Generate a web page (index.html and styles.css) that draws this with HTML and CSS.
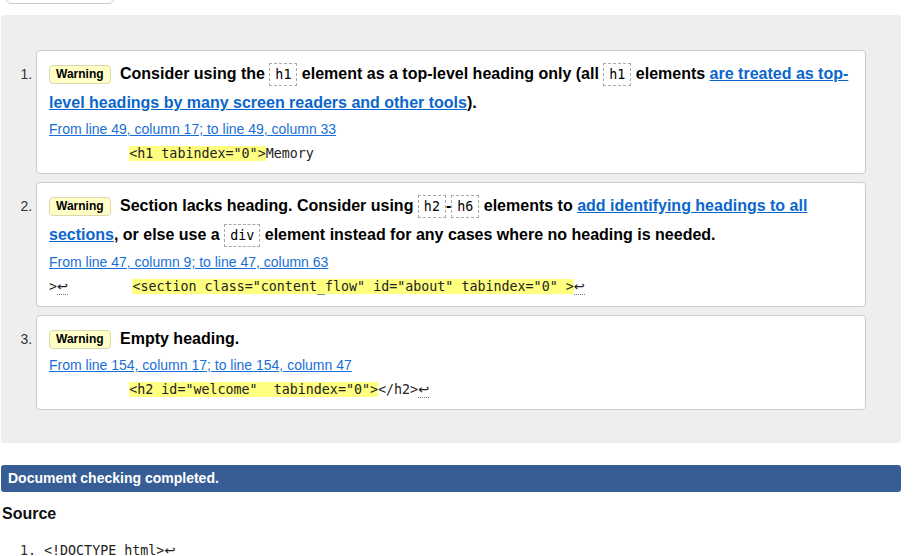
FILE: index.html
```html
<!DOCTYPE html>
<html lang="en">
<head>
<meta charset="utf-8">
<title>Nu Html Checker results</title>
<link rel="stylesheet" href="styles.css">
</head>
<body>
<div class="page">
  <div class="filter-bar"><button class="filter-btn" type="button">Message Filtering</button></div>

  <div class="results">
    <ol class="messages">
      <li class="msg">
        <p class="msg-text"><span class="badge">Warning</span> Consider using the <code class="el">h1</code> element as a top-level heading only (all <code class="el">h1</code> elements <a href="#">are treated as top-level headings by many screen readers and other tools</a>).</p>
        <p class="location"><a href="#">From line 49, column 17; to line 49, column 33</a></p>
        <p class="extract"><code>          <b class="hl">&lt;h1 tabindex="0"&gt;</b>Memory</code></p>
      </li>
      <li class="msg">
        <p class="msg-text"><span class="badge">Warning</span> Section lacks heading. Consider using <code class="el">h2</code>-<code class="el">h6</code> elements to <a href="#">add identifying headings to all sections</a>, or else use a <code class="el">div</code> element instead for any cases where no heading is needed.</p>
        <p class="location"><a href="#">From line 47, column 9; to line 47, column 63</a></p>
        <p class="extract"><code>&gt;<abbr class="lf" title="line break">↩</abbr>        <b class="hl">&lt;section class="content_flow" id="about" tabindex="0" &gt;</b><abbr class="lf" title="line break">↩</abbr></code></p>
      </li>
      <li class="msg">
        <p class="msg-text"><span class="badge">Warning</span> Empty heading.</p>
        <p class="location"><a href="#">From line 154, column 17; to line 154, column 47</a></p>
        <p class="extract"><code>          <b class="hl">&lt;h2 id="welcome"  tabindex="0"&gt;</b>&lt;/h2&gt;<abbr class="lf" title="line break">↩</abbr></code></p>
      </li>
    </ol>
  </div>

  <p class="done">Document checking completed.</p>

  <h2 class="source-title">Source</h2>
  <ol class="source">
    <li><code>&lt;!DOCTYPE html&gt;<abbr class="lf" title="line break">↩</abbr></code></li>
  </ol>
</div>
</body>
</html>
```
FILE: styles.css
```css
html, body {
  margin: 0;
  padding: 0;
  background: #fff;
}

body {
  font-family: "Liberation Sans", Arial, sans-serif;
  color: #000;
}

.page {
  width: 900px;
  margin-left: 1px;
}

.filter-bar {
  display: flow-root;
  height: 4px;
  overflow: hidden;
}

.filter-btn {
  display: block;
  margin: -20px 0 0 4px;
  width: 110px;
  height: 24px;
  padding: 0;
  border: 1px solid #c8c8c8;
  border-radius: 7px;
  background: #fff;
  font-family: "Liberation Sans", Arial, sans-serif;
  font-size: 13px;
  color: #204a87;
  line-height: 14px;
}

.results {
  margin-top: 11px;
  background: #eeeeee;
  border-radius: 4px;
}

.messages {
  margin: 0;
  padding: 35px 35px 33px 35px;
  list-style: decimal;
}

.msg {
  background: #fff;
  border: 1px solid #cccccc;
  border-radius: 4px;
  padding: 9px 12px 8px 12px;
  font-size: 14px;
  color: #222;
}

.msg + .msg {
  margin-top: 8px;
}

.msg::marker {
  font-size: 14px;
  color: #333;
}

.msg-text {
  margin: 0;
  font-size: 16px;
  font-weight: bold;
  line-height: 28px;
  color: #000;
}

.badge {
  display: inline-block;
  font-size: 12px;
  font-weight: bold;
  line-height: 17px;
  padding: 0 6px;
  margin-right: 5px;
  background: #ffffc6;
  border: 1px solid #d8d8b0;
  border-radius: 4px;
  vertical-align: 1px;
}

.msg-text a {
  color: #0b66cc;
  text-decoration: underline;
}

.el {
  font-family: "DejaVu Sans Mono", "Liberation Mono", monospace;
  font-size: 13.33px;
  font-weight: normal;
  padding: 3px 5px;
  border: 1px dashed #aaaaaa;
  color: #000;
}

.location {
  margin: 2px 0 0 0;
  line-height: 20px;
  font-size: 14px;
}

.location a {
  color: #1a6fd6;
  text-decoration: underline;
}

.extract {
  margin: 4px 0 0 0;
  line-height: 20px;
}

.extract code,
.source code {
  font-family: "DejaVu Sans Mono", "Liberation Mono", monospace;
  font-size: 13.33px;
  white-space: pre;
  color: #222;
}

.hl {
  font-weight: normal;
  background: #ffff80;
  color: #222;
}

.lf {
  font-family: "DejaVu Sans", sans-serif;
  text-decoration: none;
  border-bottom: 1px dotted #777;
  color: #222;
}

.msg:last-child {
  padding-bottom: 9px;
}

.msg:not(:last-child) {
  padding-bottom: 9px;
}

.done {
  margin: 22px 0 0 0;
  height: 27px;
  line-height: 27px;
  padding: 0 7px;
  background: #365d95;
  border-radius: 3px;
  color: #fff;
  font-size: 14px;
  font-weight: bold;
}

.source-title {
  margin: 12px 0 0 1px;
  font-size: 16px;
  font-weight: bold;
  line-height: 20px;
  color: #111;
}

.source {
  margin: 17px 0 0 0;
  padding: 0 0 0 43px;
  list-style: decimal;
  font-family: "DejaVu Sans Mono", "Liberation Mono", monospace;
  font-size: 13.33px;
  line-height: 20px;
  color: #333;
}
```
